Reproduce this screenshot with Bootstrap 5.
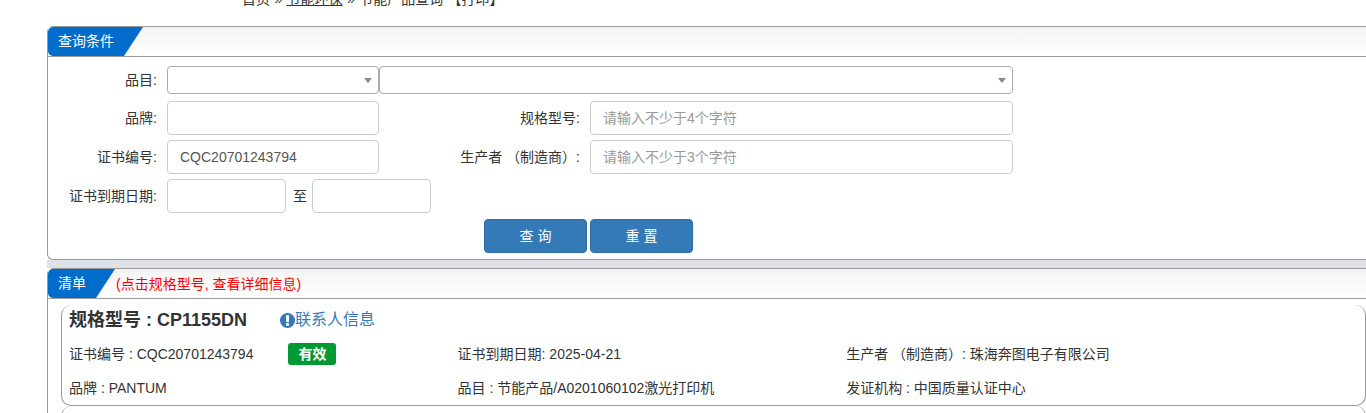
<!DOCTYPE html>
<html lang="zh-CN">
<head>
<meta charset="utf-8">
<title>节能产品查询</title>
<link rel="stylesheet" href="https://cdn.jsdelivr.net/npm/bootstrap@5.3.0/dist/css/bootstrap.min.css">
<style>
html,body{height:413px;overflow:hidden}
body{font-family:"Liberation Sans","Noto Sans CJK SC",sans-serif;font-size:14px;line-height:18px;color:#333;background:#fff}
.crumbs{height:10px;margin-top:-10px;padding-left:242px;line-height:18px;white-space:pre;word-spacing:.5px}
.crumbs a{color:#333}
.sheet{margin:26px -12px 0 47px}
.pane{border:1px solid #999;border-right:0;border-radius:6px 0 0 6px}
.pane-head{height:30px;border-bottom:1px solid #999;background:linear-gradient(#f3f3f3,#fff);display:flex;align-items:center}
.pane-tab{height:29px;background:#006dcc;color:#fff;clip-path:polygon(0 0,100% 0,calc(100% - 19px) 100%,0 100%);border-radius:5px 0 0 5px;padding:0 29px 0 10px;line-height:29px}
.tab-note{color:#f00;margin-left:1px}
.query{height:202px;padding-top:9px}
.frow{display:flex;align-items:center}
.frow-0{height:28px}.frow-1{height:34px;margin-top:7px}.frow-2{height:34px;margin-top:5px}.frow-3{height:34px;margin-top:5px}
.lab{width:109px;text-align:right;margin-right:10px;flex:none;white-space:pre}
.lab-b{width:201px}
.fbox{height:100%;border:1px solid #ccc;border-radius:4px;padding:0 12px;font-size:14px;line-height:32px;color:#555;width:212px;flex:none;background:#fff}
.fbox::placeholder{color:#999}
.fbox-w{width:423px}
.fbox-d{width:119px}
.fsel{position:relative;border-color:#aaa;padding:0}
.fsel::after{content:"";position:absolute;right:6px;top:11px;border:4px solid transparent;border-top:5px solid #888;border-bottom:0}
.fsel-w{width:634px}
.to{width:26px;padding-left:2px;text-align:center;flex:none}
.acts{display:flex;gap:3px;margin:6px 0 0 436px}
.go{width:103px;height:34px;padding:0;background:#337ab7;border:1px solid #2e6da4;color:#fff;border-radius:4px;font-size:14px;line-height:32px}
.gap-band{height:8px;background:#dee2e6;margin:0}
.result{height:200px;padding:6px 0 0 13px}
.item{width:1305px;height:101px;border:1px solid #999;border-top:0;border-radius:10px;padding:1px 0 0 7px;margin-bottom:0}
.item-head{display:flex;align-items:center;height:28px;margin-top:0}
.item-title{font-size:18px;font-weight:700;line-height:28px;width:211px;flex:none;white-space:pre}
.item-link{color:#337ab7;font-size:16px;text-decoration:none;display:flex;align-items:center}
.item-link svg{flex:none}
.item-grid{display:grid;grid-template-columns:repeat(3,388.6px);grid-auto-rows:34px;align-items:center;margin-top:3px}
.cell{white-space:pre;display:flex;align-items:center}
.ok{display:inline-block;width:48px;height:22px;margin-left:35px;border-radius:3px;background:#093;color:#fff;font-weight:700;font-size:14px;line-height:22px;text-align:center}
</style>
</head>
<body>
<div class="crumbs">首页 » <a href="#">节能环保</a> » 节能产品查询 【打印】</div>
<div class="sheet">
  <div class="pane">
    <div class="pane-head"><div class="pane-tab">查询条件</div></div>
    <form class="query">
      <div class="frow frow-0">
        <div class="lab">品目:</div>
        <div class="fbox fsel"></div>
        <div class="fbox fsel fsel-w"></div>
      </div>
      <div class="frow frow-1">
        <div class="lab">品牌:</div>
        <input class="fbox" type="text">
        <div class="lab lab-b">规格型号:</div>
        <input class="fbox fbox-w" type="text" placeholder="请输入不少于4个字符">
      </div>
      <div class="frow frow-2">
        <div class="lab">证书编号:</div>
        <input class="fbox" type="text" value="CQC20701243794">
        <div class="lab lab-b">生产者 （制造商）:</div>
        <input class="fbox fbox-w" type="text" placeholder="请输入不少于3个字符">
      </div>
      <div class="frow frow-3">
        <div class="lab">证书到期日期:</div>
        <input class="fbox fbox-d" type="text">
        <div class="to">至</div>
        <input class="fbox fbox-d" type="text">
      </div>
      <div class="acts">
        <button class="btn go" type="button">查 询</button>
        <button class="btn go" type="button">重 置</button>
      </div>
    </form>
  </div>
  <div class="gap-band"></div>
  <div class="pane">
    <div class="pane-head"><div class="pane-tab">清单</div><div class="tab-note">(点击规格型号, 查看详细信息)</div></div>
    <div class="result">
      <div class="item">
        <div class="item-head">
          <div class="item-title">规格型号 : CP1155DN</div>
          <a class="item-link" href="#"><svg width="15" height="15" viewBox="0 0 15 15"><circle cx="7.5" cy="7.5" r="7.5" fill="#337ab7"/><path d="M5.8 2.2h3.4l-.4 6.8H6.2z" fill="#fff"/><rect x="6" y="10" width="3" height="2.8" rx=".6" fill="#fff"/></svg>联系人信息</a>
        </div>
        <div class="item-grid">
          <div class="cell">证书编号 : CQC20701243794<span class="ok">有效</span></div>
          <div class="cell">证书到期日期: 2025-04-21</div>
          <div class="cell">生产者 （制造商）: 珠海奔图电子有限公司</div>
          <div class="cell">品牌 : PANTUM</div>
          <div class="cell">品目 : 节能产品/A0201060102激光打印机</div>
          <div class="cell">发证机构 : 中国质量认证中心</div>
        </div>
      </div>
      <div class="item"></div>
    </div>
  </div>
</div>
<script src="https://cdn.jsdelivr.net/npm/bootstrap@5.3.0/dist/js/bootstrap.bundle.min.js"></script>
</body>
</html>
